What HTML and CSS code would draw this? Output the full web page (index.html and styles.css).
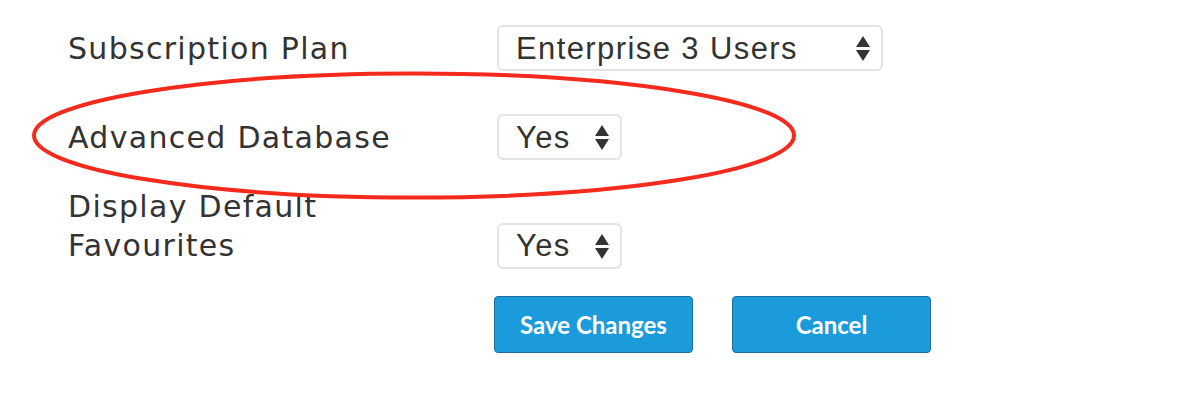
FILE: index.html
```html
<!DOCTYPE html>
<html lang="en">
<head>
    <meta charset="UTF-8">
    <title>Account Settings</title>
    <link rel="stylesheet" href="styles.css">
</head>
<body>
    <form class="settings">
        <div class="form-row first">
            <label class="field-label" for="plan">Subscription Plan</label>
            <span class="select-wrap wide">
                <select id="plan" class="field-select">
                    <option>Enterprise 3 Users</option>
                </select>
            </span>
        </div>
        <div class="form-row second">
            <label class="field-label" for="advdb">Advanced Database</label>
            <span class="select-wrap">
                <select id="advdb" class="field-select">
                    <option>Yes</option>
                </select>
            </span>
        </div>
        <div class="form-row third">
            <label class="field-label" for="favs">Display Default Favourites</label>
            <span class="select-wrap">
                <select id="favs" class="field-select">
                    <option>Yes</option>
                </select>
            </span>
        </div>
        <div class="form-actions">
            <button type="button" class="butn">Save Changes</button>
            <button type="button" class="butn">Cancel</button>
        </div>
    </form>
    <!-- red annotation round the Advanced Database row -->
    <svg class="annotation" width="1190" height="400" viewBox="0 0 1190 400">
        <ellipse cx="414" cy="135.5" rx="380" ry="62" fill="none" stroke="#f42a1d" stroke-width="4"/>
    </svg>
</body>
</html>
```

FILE: styles.css
```css
body {
    margin: 0;
    background: #ffffff;
    color: #333333;
    width: 1190px;
    height: 400px;
    overflow: hidden;
    position: relative;
}
.settings {
    padding: 25px 0 0 68px;
}
.form-row {
    display: grid;
    grid-template-columns: 429px auto;
    align-items: last baseline;
    justify-items: start;
}
.form-row.first {
    margin-bottom: 43px;
}
.form-row.second {
    margin-bottom: 27px;
}
.form-row.third {
    margin-bottom: 27px;
}
.field-label {
    font-family: "DejaVu Sans", Verdana, sans-serif;
    font-size: 30px;
    line-height: 39px;
    letter-spacing: 1.3px;
    width: 345px;
}
.select-wrap {
    display: inline-block;
    position: relative;
}
.select-wrap::before,
.select-wrap::after {
    content: "";
    position: absolute;
    right: 13px;
    border-left: 7px solid transparent;
    border-right: 7px solid transparent;
    pointer-events: none;
}
.select-wrap::before {
    top: 11px;
    border-bottom: 11px solid #333333;
}
.select-wrap::after {
    bottom: 10px;
    border-top: 11px solid #333333;
}
.field-select {
    -webkit-appearance: none;
    appearance: none;
    font-family: "Liberation Sans", Arial, sans-serif;
    font-size: 31px;
    letter-spacing: 1.4px;
    color: #333333;
    background: #ffffff;
    border: 2px solid #e3e3e3;
    border-radius: 6px;
    height: 46px;
    width: 125px;
    padding: 0 0 0 17px;
    margin: 0;
}
.wide .field-select {
    width: 386px;
}
.form-actions {
    display: flex;
    gap: 39px;
    padding-left: 426px;
}
.butn {
    width: 199px;
    height: 57px;
    background: #1b9bdc;
    border: 1px solid #1b6f99;
    border-radius: 4px;
    color: #ffffff;
    font-family: Lato, "Open Sans", sans-serif;
    font-weight: 700;
    font-size: 24px;
    padding: 0;
    margin: 0;
}
.annotation {
    position: absolute;
    left: 0;
    top: 0;
    pointer-events: none;
}
```
